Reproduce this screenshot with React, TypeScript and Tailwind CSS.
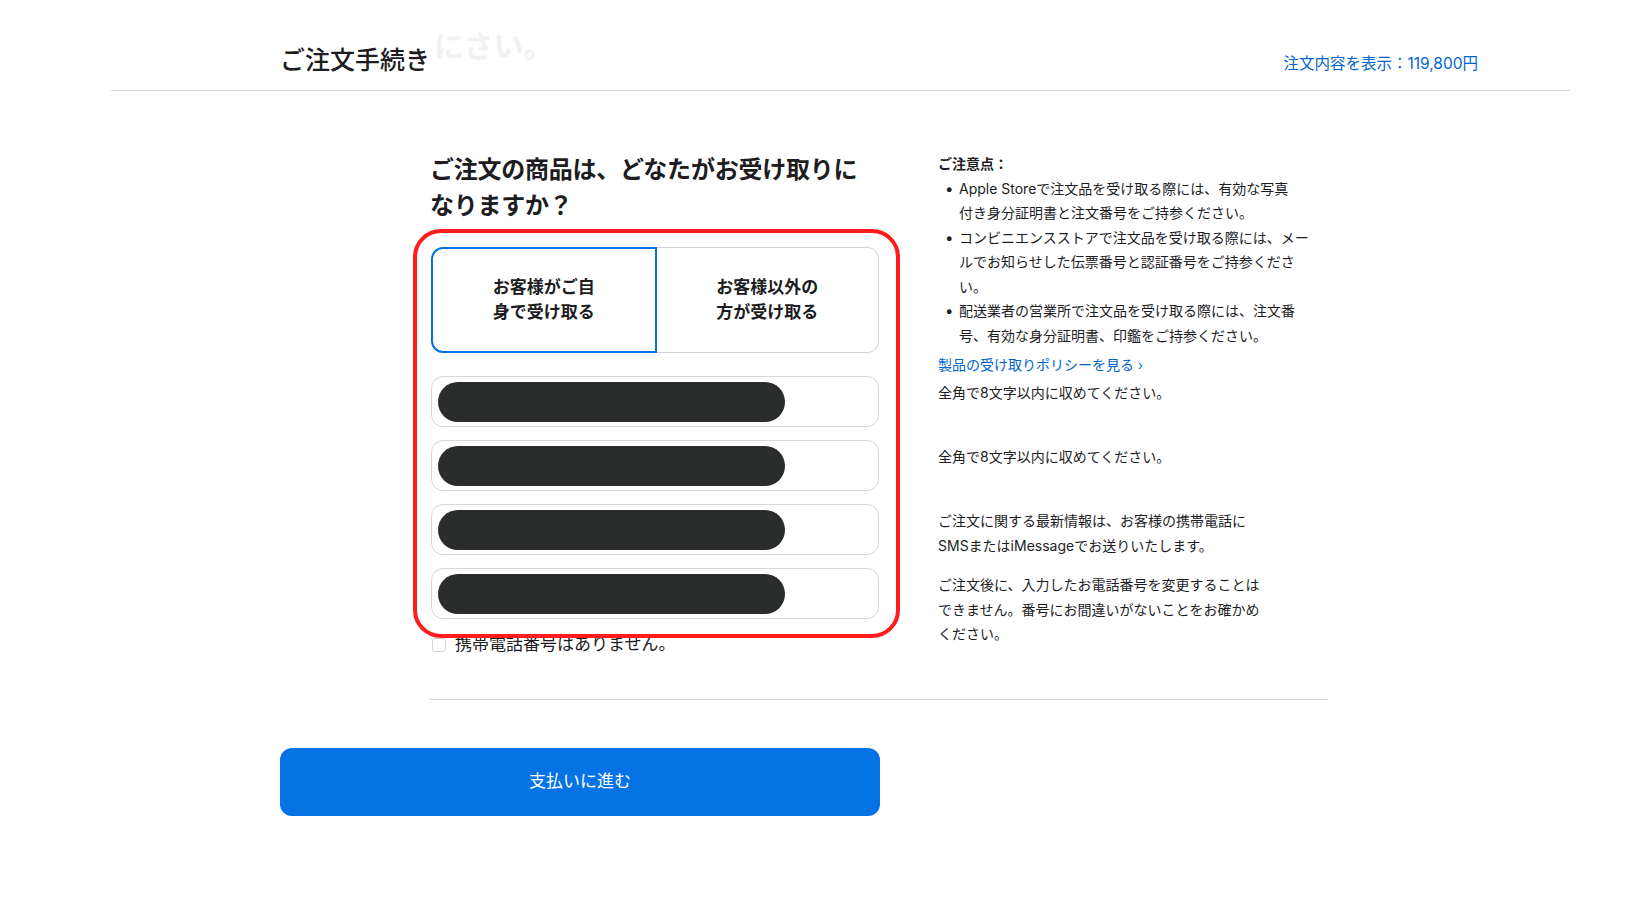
import React from "react";

const notes: React.ReactNode[] = [
  <>Apple Storeで注文品を受け取る際には、有効な写真<br />付き身分証明書と注文番号をご持参ください。</>,
  <>コンビニエンスストアで注文品を受け取る際には、メー<br />ルでお知らせした伝票番号と認証番号をご持参くださ<br />い。</>,
  <>配送業者の営業所で注文品を受け取る際には、注文番<br />号、有効な身分証明書、印鑑をご持参ください。</>,
];

const fields = [0, 1, 2, 3];

function App() {
  return (
    <div className="min-h-screen bg-white text-[#1d1d1f] font-['Inter','Noto_Sans_CJK_JP',sans-serif] relative">
      {/* 薄い残り文字 */}
      <div className="absolute left-[434px] top-[24px] text-[30px] font-bold text-[#f1f1f1] select-none">
        にさい。
      </div>

      {/* ヘッダー */}
      <div className="ml-[111px] mr-[70px] border-b border-[#d6d6d6] h-[91px]">
        <div className="flex items-baseline justify-between pl-[169px] pr-[92px] pt-[44px]">
          <h1 className="text-[25px] leading-[32px] font-medium relative">ご注文手続き</h1>
          <a className="text-[15.5px] text-[#0066cc]">注文内容を表示：119,800円</a>
        </div>
      </div>

      <div className="pl-[280px] pt-[61px]">
        <div className="flex pl-[150px] gap-[58px]">
          {/* 左カラム */}
          <div className="w-[450px] flex-none">
            <h2 className="text-[24px] leading-[36px] font-bold tracking-[-0.01em]">
              ご注文の商品は、どなたがお受け取りに<br />なりますか？
            </h2>

            <div className="relative mt-[23px]">
              <div className="flex h-[106px] pl-[1px] pr-[1px]">
                <button className="flex-1 border-2 border-[#0071e3] rounded-l-[12px] text-[17px] leading-[25px] font-semibold">
                  お客様がご自<br />身で受け取る
                </button>
                <button className="flex-1 border border-l-0 border-[#d2d2d7] rounded-r-[12px] text-[17px] leading-[25px] font-semibold">
                  お客様以外の<br />方が受け取る
                </button>
              </div>

              <div className="mt-[23px] flex flex-col gap-[13px] pl-[1px] pr-[1px]">
                {fields.map((i) => (
                  <div
                    key={i}
                    className="h-[51px] border border-[#d6d6d6] rounded-[12px] flex items-center pl-[6px]"
                  >
                    <div className="w-[347px] h-[40px] rounded-full bg-[#2a2b2b]" />
                  </div>
                ))}
              </div>

              {/* 赤枠 */}
              <div className="absolute left-[-17px] top-[-18px] right-[-20px] bottom-[-19px] border-[4px] border-[#fe1c1c] rounded-[28px] pointer-events-none z-10" />
            </div>

            <label className="flex items-center mt-[14px] h-[24px] pl-[2px]">
              <span className="w-[14px] h-[14px] border border-[#d2d2d7] rounded-[3px] flex-none" />
              <span className="ml-[9px] text-[17px]">携帯電話番号はありません。</span>
            </label>
          </div>

          {/* 右カラム */}
          <div className="w-[372px] flex-none text-[14px] leading-[24.5px]">
            <p className="font-bold">ご注意点：</p>
            <ul>
              {notes.map((n, i) => (
                <li key={i} className="flex">
                  <span className="w-[21px] flex-none pl-[7px] text-[15px]">•</span>
                  <span className="whitespace-nowrap">{n}</span>
                </li>
              ))}
            </ul>
            <a className="block mt-[5px] leading-[24px] text-[#0066cc]">
              製品の受け取りポリシーを見る <span className="text-[13px]">›</span>
            </a>
            <p className="mt-[4px] leading-[24px]">全角で8文字以内に収めてください。</p>
            <p className="mt-[40px] leading-[24px]">全角で8文字以内に収めてください。</p>
            <p className="mt-[40px]">
              ご注文に関する最新情報は、お客様の携帯電話に<br />SMSまたはiMessageでお送りいたします。
            </p>
            <p className="mt-[15px]">
              ご注文後に、入力したお電話番号を変更することは<br />できません。番号にお間違いがないことをお確かめ<br />ください。
            </p>
          </div>
        </div>

        <div className="ml-[150px] w-[898px] border-t border-[#d2d2d7] mt-[42px]" />

        <button className="mt-[48px] w-[600px] h-[68px] rounded-[12px] bg-[#0573e6] text-white text-[17px]">
          支払いに進む
        </button>
      </div>
    </div>
  );
}

export default App;
